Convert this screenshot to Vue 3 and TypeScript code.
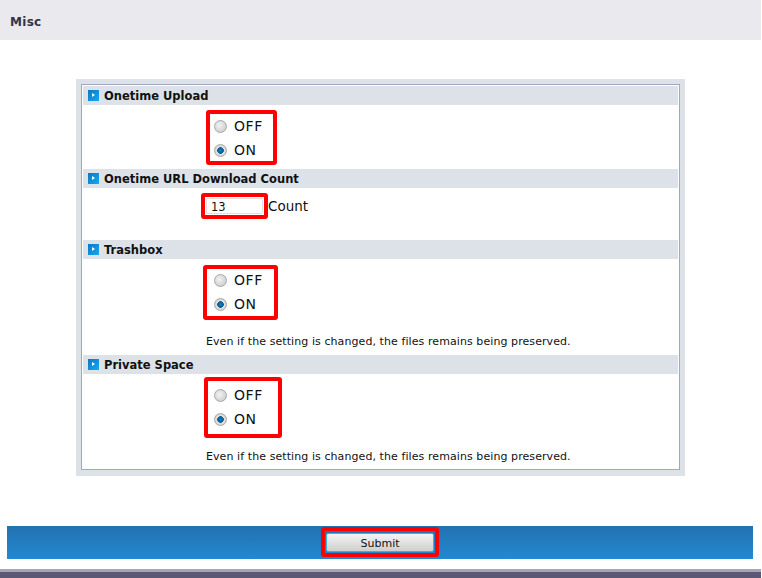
<script setup lang="ts">
interface RadioSection {
  title: string
  boxClass: string
  note?: string
}

const note = 'Even if the setting is changed, the files remains being preserved.'

const upload: RadioSection = { title: 'Onetime Upload', boxClass: 'box-upload' }
const trash: RadioSection = { title: 'Trashbox', boxClass: 'box-trash', note }
const priv: RadioSection = { title: 'Private Space', boxClass: 'box-private', note }
</script>

<template>
  <div class="page">
    <header class="page-title">Misc</header>

    <main class="content">
      <div class="panel">
        <div class="panel-inner">
          <section class="section section-upload">
            <h3 class="section-head"><i class="bullet"></i>{{ upload.title }}</h3>
            <div class="red-box radio-box" :class="upload.boxClass">
              <label class="radio-row"><span class="radio"></span>OFF</label>
              <label class="radio-row"><span class="radio checked"></span>ON</label>
            </div>
          </section>

          <section class="section section-count">
            <h3 class="section-head"><i class="bullet"></i>Onetime URL Download Count</h3>
            <div class="count-row">
              <div class="red-box input-box"><div class="fake-input">13</div></div>
              <span class="count-label">Count</span>
            </div>
          </section>

          <section class="section section-trash">
            <h3 class="section-head"><i class="bullet"></i>{{ trash.title }}</h3>
            <div class="red-box radio-box" :class="trash.boxClass">
              <label class="radio-row"><span class="radio"></span>OFF</label>
              <label class="radio-row"><span class="radio checked"></span>ON</label>
            </div>
            <p class="note">{{ trash.note }}</p>
          </section>

          <section class="section section-private">
            <h3 class="section-head"><i class="bullet"></i>{{ priv.title }}</h3>
            <div class="red-box radio-box" :class="priv.boxClass">
              <label class="radio-row"><span class="radio"></span>OFF</label>
              <label class="radio-row"><span class="radio checked"></span>ON</label>
            </div>
            <p class="note">{{ priv.note }}</p>
          </section>
        </div>
      </div>
    </main>

    <div class="submit-bar">
      <div class="red-box submit-box"><button class="submit" type="button">Submit</button></div>
    </div>

    <footer class="page-foot"></footer>
  </div>
</template>

<style>
html,
body {
  margin: 0;
  background: #fff;
  overflow: hidden;
}
</style>

<style scoped>
.page {
  width: 761px;
  height: 578px;
  font-family: 'DejaVu Sans', sans-serif;
  font-size: 12px;
  color: #111;
  display: flex;
  flex-direction: column;
}

.page-title {
  height: 40px;
  box-sizing: border-box;
  padding: 15px 0 0 10px;
  background: #e9e9ee;
  color: #33334a;
  font-size: 12px;
  line-height: 14px;
  font-weight: bold;
  letter-spacing: 0.3px;
}

.content {
  padding: 39px 0 0 76px;
}

.panel {
  width: 609px;
  height: 397px;
  box-sizing: border-box;
  padding: 5px 5px 6px;
  background: #dde1e8;
}

.panel-inner {
  height: 100%;
  box-sizing: border-box;
  padding: 1px;
  border: 1px solid #a0a8bc;
  background: #fff;
}

.section-upload {
  height: 83px;
}

.section-count {
  height: 71px;
}

.section-trash {
  height: 115px;
}

.section-head {
  display: flex;
  align-items: center;
  height: 19px;
  margin: 0;
  padding-left: 5px;
  background: #dde1e8;
  font-size: 11.5px;
  font-weight: bold;
}

.bullet {
  position: relative;
  width: 11px;
  height: 11px;
  margin-right: 5px;
  background: linear-gradient(135deg, #0878c8, #18a8f0);
}

.bullet::after {
  content: '';
  position: absolute;
  left: 4px;
  top: 3px;
  border-left: 3px solid #fff;
  border-top: 2.5px solid transparent;
  border-bottom: 2.5px solid transparent;
}

.red-box {
  box-sizing: border-box;
  border: 4px solid #f00;
  border-radius: 3px;
}

.radio-box {
  display: flex;
  flex-direction: column;
  height: 55px;
}

.box-upload {
  width: 71px;
  margin: 5px 0 0 123px;
  --radio-inset: 4px;
}

.box-trash {
  width: 75px;
  margin: 6px 0 0 120px;
  --radio-inset: 7px;
}

.box-trash .radio-row:first-child {
  margin-top: -1px;
}

.box-private {
  width: 78px;
  height: 61px;
  margin: 3px 0 0 121px;
  padding-top: 2px;
  --radio-inset: 6px;
}

.radio-row {
  display: flex;
  flex: none;
  align-items: center;
  height: 24px;
  padding-left: var(--radio-inset);
  font-size: 14px;
  letter-spacing: 0.6px;
}

.radio {
  box-sizing: border-box;
  width: 13px;
  height: 13px;
  margin-right: 7px;
  border: 1px solid #a8a8a8;
  border-radius: 50%;
  background: radial-gradient(circle at 40% 40%, #f2f2f2, #c4c4c4);
}

.radio.checked {
  background: radial-gradient(circle, #0a84c8 0, #0a5a90 3px, #e4e4e4 3.6px, #c0c0c0 100%);
}

.count-row {
  display: flex;
  align-items: center;
  margin: 5px 0 0 118px;
}

.input-box {
  width: 67px;
  height: 26px;
  padding: 1px;
}

.fake-input {
  height: 16px;
  box-sizing: border-box;
  padding-left: 4px;
  border: 1px solid #e0e0e0;
  border-radius: 2px;
  font-size: 11.5px;
  line-height: 16px;
}

.count-label {
  font-size: 13.5px;
}

.note {
  margin: 15px 0 0 123px;
  font-size: 11px;
  line-height: 14px;
  letter-spacing: 0.08px;
}

.section-private .note {
  margin-top: 12px;
}

.submit-bar {
  display: flex;
  justify-content: center;
  height: 33px;
  margin: 50px 8px 0 7px;
  background: linear-gradient(#2272b0, #2488d2);
}

.submit-box {
  width: 118px;
  height: 30px;
  margin-top: 1px;
  padding: 2px 1px 1px;
}

.submit {
  display: block;
  width: 100%;
  height: 19px;
  padding: 1px 0 0;
  border: 1px solid #33b5e0;
  border-radius: 2px;
  background: linear-gradient(#f4f4f4, #cfcfcf);
  color: #111;
  font-family: inherit;
  font-size: 11px;
}

.page-foot {
  height: 6px;
  margin-top: 10px;
  border-top: 3px solid #a6a4b6;
  background: #5a5874;
}
</style>
